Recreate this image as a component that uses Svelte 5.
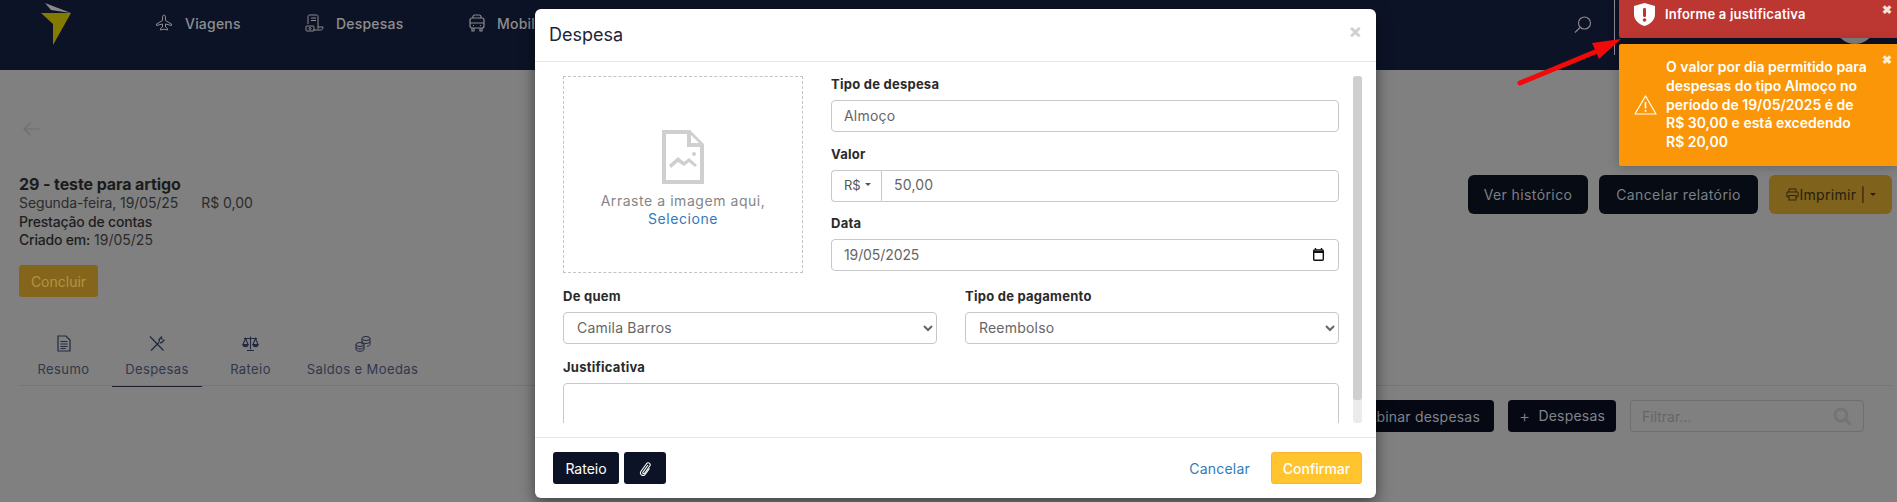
<script>
  let tipo = 'Almoço';
  let valor = '50,00';
  let data = '19/05/2025';
  let justificativa = '';
</script>

<div class="page">
  <header class="topbar">
    <svg class="logo" width="32" height="44" viewBox="0 0 32 44">
      <polygon points="4,0 30,10 10,7" fill="#8a8a8a" />
      <polygon points="0,10 30,10 12,42 12,21" fill="#857a00" />
    </svg>
    <nav class="mainnav">
      <a href="#v" class="nav-viagens">
        <svg width="18" height="18" viewBox="0 0 18 18" fill="none" stroke="#8c8c8c" stroke-width="1">
          <path d="M9 1c1 0 1.500 1.500 1.500 3v2.500l6 3.500v1.500l-6-1.500v3l2 1.500v1.500l-3.500-.8-3.500.8v-1.500l2-1.500v-3l-6 1.500v-1.500l6-3.500v-2.500c0-1.500.5-3 1.500-3z" />
        </svg>
        <span>Viagens</span>
      </a>
      <a href="#d" class="nav-despesas">
        <svg width="19" height="18" viewBox="0 0 19 18" fill="none" stroke="#8c8c8c" stroke-width="1">
          <path d="M3 10V2.500C3 1.500 3.500 1 4.500 1h7c1 0 1.500.5 1.500 1.500V15" />
          <path d="M6 4h5M6 6.500h5" />
          <path d="M13 13h5c0 2-1 3-2.500 3H8" />
          <rect x="1" y="12" width="8" height="5" rx="0.8" />
          <circle cx="5" cy="14.500" r="1" />
        </svg>
        <span>Despesas</span>
      </a>
      <a href="#m" class="nav-mobil">
        <svg width="16" height="18" viewBox="0 0 16 18" fill="none" stroke="#8c8c8c" stroke-width="1.200">
          <path d="M4 4V2.500C4 1.500 5 1 6 1h4c1 0 2 .5 2 1.500V4" />
          <rect x="1" y="4" width="14" height="10" rx="2" />
          <path d="M1 9h14M3 14v3h2v-3M11 14v3h2v-3" />
          <path d="M4 11.500h1M11 11.500h1" />
        </svg>
        <span>Mobilidade</span>
      </a>
    </nav>
    <div class="top-right">
      <svg width="18" height="18" viewBox="0 0 18 18" fill="none" stroke="#8c8c8c" stroke-width="1.100">
        <circle cx="10.500" cy="7" r="6" />
        <path d="M6 11.500L1 16.500" />
      </svg>
      <span class="divider"></span>
      <span class="avatar"></span>
    </div>
  </header>

  <main class="content">
    <svg class="back" width="18" height="14" viewBox="0 0 18 14" fill="none" stroke="#6e6e6e" stroke-width="1.200">
      <path d="M17.500 7H1M7.500 1L1 7l6.500 6" />
    </svg>

    <section class="summary">
      <div class="info">
        <h2>29 - teste para artigo</h2>
        <p><span class="date">Segunda-feira, 19/05/25</span><span>R$ 0,00</span></p>
        <p><b>Prestação de contas</b></p>
        <p><b>Criado em:</b> 19/05/25</p>
        <button class="btn-concluir">Concluir</button>
      </div>
      <div class="actions">
        <button class="btn-dark historico">Ver histórico</button>
        <button class="btn-dark cancelar">Cancelar relatório</button>
        <button class="btn-print">
          <svg width="13" height="13" viewBox="0 0 13 13" fill="none" stroke="#2c2616" stroke-width="1">
            <path d="M3 4V1h7v3M3 9H1V4h11v5h-2" />
            <rect x="3" y="7.500" width="7" height="4.500" />
          </svg>Imprimir | <i class="caret"></i>
        </button>
      </div>
    </section>

    <ul class="tabs">
      <li class="first">
        <svg width="14" height="17" viewBox="0 0 14 17" fill="none" stroke="#232a40" stroke-width="1.200">
          <path d="M1 1h8l4 4v11H1z" />
          <path d="M3.500 6.500h7M3.500 9h7M3.500 11.500h7M3.500 13.500h5" stroke-width="1" />
        </svg>
        Resumo
      </li>
      <li class="active">
        <svg width="16" height="16" viewBox="0 0 16 16" fill="none" stroke="#232a40" stroke-width="1.300">
          <path d="M1 1l13.500 14M2 15L10 7" />
          <path d="M10.500 6.500L10 4l3-3M11 7l1.500.3 3-3M12 2.500l1.500 1.500" />
        </svg>
        Despesas
      </li>
      <li>
        <svg width="17" height="16" viewBox="0 0 17 16" fill="none" stroke="#232a40" stroke-width="1.100">
          <path d="M8.500 1v13M5 15h7M2 3h13" />
          <path d="M3.500 3L1 9h5zM13.500 3L11 9h5z" />
          <path d="M1 9c0 3 5 3 5 0zM11 9c0 3 5 3 5 0z" fill="#232a40" />
        </svg>
        Rateio
      </li>
      <li>
        <svg width="16" height="16" viewBox="0 0 16 16" fill="none" stroke="#232a40" stroke-width="1">
          <ellipse cx="11" cy="3" rx="4" ry="2" />
          <path d="M7 3v6M15 3v6c0 1-1 1.600-3 1.800M7 6c0 1 2 2 4 2s4-1 4-2" />
          <ellipse cx="5" cy="9" rx="4" ry="2" />
          <path d="M1 9v5c0 1 2 1.800 4 1.800s4-.8 4-1.800V9M1 11.500c0 1 2 2 4 2s4-1 4-2" />
        </svg>
        Saldos e Moedas
      </li>
    </ul>

    <div class="toolbar">
      <button class="btn-dark small">Combinar despesas</button>
      <button class="btn-dark small add"><span class="plus">+</span> Despesas</button>
      <div class="filter">
        <span>Filtrar...</span>
        <svg width="19" height="19" viewBox="0 0 19 19" fill="none" stroke="#747474" stroke-width="3">
          <circle cx="8" cy="8" r="6" />
          <path d="M12.500 12.500l5 5" />
        </svg>
      </div>
    </div>
  </main>

  <div class="modal">
    <div class="modal-head">
      <h3>Despesa</h3>
      <span class="close">×</span>
    </div>
    <div class="modal-body">
      <div class="scroll-area">
        <div class="top-row">
          <div class="dropzone">
            <svg width="42" height="54" viewBox="0 0 42 54">
              <path fill="#cfcfcf" fill-rule="evenodd" d="M0 0h28l14 14v40H0zM4 4v46h34V17H25V4zM29 5v8h8z" />
              <circle cx="32" cy="24" r="2" fill="#cfcfcf" />
              <path d="M7 35l9-8 6 5 5-4 8 7-2 2-6-5-5 4-6-4-7 6z" fill="#cfcfcf" />
            </svg>
            <p>Arraste a imagem aqui,<br /><a href="#s">Selecione</a></p>
          </div>
          <div class="right-col">
            <div class="field">
              <label for="tipo">Tipo de despesa</label>
              <input id="tipo" bind:value={tipo} />
            </div>
            <div class="field">
              <label for="valor">Valor</label>
              <div class="input-group">
                <span class="addon">R$ <i class="caret grey"></i></span>
                <input id="valor" bind:value={valor} />
              </div>
            </div>
            <div class="field">
              <label for="data">Data</label>
              <div class="date-wrap">
                <input id="data" class="date" bind:value={data} />
                <svg class="cal" width="11" height="13" viewBox="0 0 11 13" fill="none" stroke="#111" stroke-width="1.400">
                  <rect x="0.700" y="2" width="9.600" height="10.300" rx="1" />
                  <path d="M0.700 4h9.600" stroke-width="2" />
                  <path d="M2.500 0v2M8.500 0v2" />
                </svg>
              </div>
            </div>
          </div>
        </div>
        <div class="two-cols">
          <div class="field">
            <label for="quem">De quem</label>
            <select id="quem"><option>Camila Barros</option></select>
          </div>
          <div class="field">
            <label for="pag">Tipo de pagamento</label>
            <select id="pag"><option>Reembolso</option></select>
          </div>
        </div>
        <div class="field">
          <label for="just">Justificativa</label>
          <textarea id="just" rows="4" bind:value={justificativa}></textarea>
        </div>
      </div>
      <div class="scroll-track"><div class="scroll-thumb"></div></div>
    </div>
    <div class="modal-foot">
      <button class="btn-modal">Rateio</button>
      <button class="btn-modal clip" aria-label="Anexar">
        <svg width="12" height="15" viewBox="0 0 12 15" fill="none" stroke="#fff" stroke-width="1.100">
          <path d="M9 4L4 11c-.8 1.200.8 2.300 1.600 1.200L10.800 5c1.600-2.300-1.700-4.500-3.300-2.300L2 10.200c-2.200 3.200 2.200 6 4.300 3L10.500 7.500" />
        </svg>
      </button>
      <a href="#c" class="cancel">Cancelar</a>
      <button class="btn-confirm">Confirmar</button>
    </div>
  </div>

  <div class="toasts">
    <div class="toast error">
      <svg width="21" height="23" viewBox="0 0 21 23">
        <path fill="#fff" d="M10.500 0L21 3v8c0 6-4.500 10-10.500 12C4.500 21 0 17 0 11V3z" />
        <rect x="9" y="5" width="3" height="9" rx="1.200" fill="#bc3632" />
        <circle cx="10.500" cy="17" r="1.800" fill="#bc3632" />
      </svg>
      <span>Informe a justificativa</span>
      <b class="toast-x">✖</b>
    </div>
    <div class="toast warn">
      <svg width="23" height="20" viewBox="0 0 23 20" fill="none" stroke="#fff" stroke-width="1.200">
        <path d="M11.500 1L22 19H1z" stroke-linejoin="round" />
        <path d="M11.500 7v6.500M11.500 15v1.800" stroke-width="1.600" />
      </svg>
      <span>O valor por dia permitido para<br />despesas do tipo Almoço no<br />período de 19/05/2025 é de<br />R$ 30,00 e está excedendo<br />R$ 20,00</span>
      <b class="toast-x">✖</b>
    </div>
  </div>

  <svg class="arrow" width="110" height="50" viewBox="0 0 110 50">
    <path d="M3 46L78 15" stroke="#f00a0a" stroke-width="5" stroke-linecap="round" />
    <polygon points="104,2 75,6 82,22" fill="#f00a0a" />
  </svg>
</div>

<style>
  :global(body) {
    margin: 0;
    background: #808080;
  }
  * {
    box-sizing: border-box;
  }
  .page {
    position: relative;
    width: 1897px;
    height: 502px;
    overflow: hidden;
    background: #808080;
    font-family: Inter, "Open Sans", sans-serif;
    font-size: 13px;
    color: #222;
  }
  button {
    font-family: inherit;
    border: 0;
  }

  .topbar {
    display: flex;
    height: 70px;
    background: #0d1326;
    padding-left: 41px;
  }
  .logo {
    margin-top: 3px;
  }
  .mainnav {
    display: flex;
    margin-left: 82px;
    height: 46px;
    align-items: center;
  }
  .mainnav a {
    display: flex;
    align-items: center;
    gap: 12px;
    color: #8e8e8e;
    text-decoration: none;
    font-size: 14px;
    font-weight: 500;
    letter-spacing: 0.200px;
  }
  .nav-viagens {
    width: 150px;
  }
  .nav-despesas {
    width: 164px;
  }
  .top-right {
    margin-left: auto;
    display: flex;
    align-items: flex-start;
    padding-top: 16px;
    gap: 22px;
    width: 277px;
  }
  .top-right svg {
    flex: none;
    margin-left: -46px;
  }
  .divider {
    flex: none;
    width: 1px;
    height: 55px;
    margin-top: -16px;
    background: #8a8d97;
  }
  .avatar {
    flex: none;
    width: 40px;
    height: 40px;
    margin: -12px 0 0 198px;
    border-radius: 50%;
    background: #8c8c8c;
  }

  .content {
    padding: 52px 5px 0 19px;
  }
  .back {
    display: block;
    margin-left: 4px;
  }
  .summary {
    display: flex;
    justify-content: space-between;
    margin-top: 39px;
  }
  .info h2 {
    margin: 0;
    font-size: 16px;
    line-height: 19px;
    font-weight: 700;
    letter-spacing: -0.100px;
    color: #1b1b1b;
  }
  .info p {
    margin: 0;
    font-size: 14px;
    line-height: 18.700px;
    color: #2b2b2b;
  }
  .info b {
    font-weight: 500;
    letter-spacing: -0.200px;
    color: #1d1d1d;
  }
  .date {
    margin-right: 23px;
  }
  .btn-concluir {
    display: block;
    margin-top: 15px;
    width: 79px;
    height: 32px;
    border-radius: 3px;
    background: #85651b;
    color: #b39444;
    font-size: 14px;
  }
  .actions {
    display: flex;
    gap: 11px;
  }
  .btn-dark {
    height: 39px;
    padding: 0;
    border-radius: 6px;
    background: #070b14;
    color: #7c7f86;
    font-size: 14px;
    letter-spacing: 0.400px;
  }
  .historico {
    width: 120px;
  }
  .cancelar {
    width: 159px;
  }
  .btn-print {
    width: 123px;
    height: 39px;
    border-radius: 6px;
    background: #7f621b;
    color: #25200f;
    font-size: 14px;
    letter-spacing: 0.300px;
    display: flex;
    align-items: center;
    justify-content: center;
    gap: 1px;
  }
  .caret {
    display: inline-block;
    border: 3.500px solid transparent;
    border-top-color: #25200f;
    border-bottom: 0;
    margin-left: 3px;
    vertical-align: middle;
  }
  .caret.grey {
    border-top-color: #555;
  }

  .tabs {
    display: grid;
    grid-template-columns: 93px 90px 97px 127px;
    margin: 38px 0 0;
    padding: 0;
    list-style: none;
    border-bottom: 1px solid #757575;
  }
  .tabs li {
    display: flex;
    flex-direction: column;
    align-items: center;
    gap: 8px;
    height: 52px;
    margin-bottom: -2px;
    color: #32374a;
    line-height: 18px;
    letter-spacing: 0.400px;
  }
  .tabs li.first {
    padding-right: 4px;
  }
  .tabs svg {
    flex: none;
    height: 17px;
  }
  .tabs li.active {
    border-bottom: 1px solid #1c2030;
  }

  .toolbar {
    display: flex;
    align-items: flex-start;
    justify-content: flex-end;
    gap: 14px;
    margin-top: 14px;
    padding-right: 28px;
  }
  .btn-dark.small {
    height: 32px;
    font-size: 14px;
    letter-spacing: 0.200px;
    padding: 0 14px;
    border-radius: 4px;
    background: #060913;
    color: #80838a;
  }
  .btn-dark.add {
    width: 108px;
    padding: 0;
  }
  .plus {
    font-size: 17px;
    font-weight: 300;
    margin-right: 4px;
    vertical-align: -1px;
  }
  .filter {
    display: flex;
    align-items: center;
    justify-content: space-between;
    width: 234px;
    height: 32px;
    padding: 0 11px;
    border: 1px solid #6f6f6f;
    border-radius: 4px;
    color: #666;
    font-size: 14px;
  }

  .modal {
    position: absolute;
    left: 535px;
    top: 9px;
    width: 841px;
    height: 489px;
    display: flex;
    flex-direction: column;
    background: #fff;
    border-radius: 6px;
    box-shadow: 0 5px 15px rgba(0, 0, 0, 0.5);
  }
  .modal-head {
    display: flex;
    justify-content: space-between;
    height: 53px;
    padding: 0 14px;
    border-bottom: 1px solid #e5e5e5;
  }
  .modal-head h3 {
    margin: 0;
    font-size: 18px;
    line-height: 52px;
    font-weight: 400;
    color: #20263a;
  }
  .close {
    font-size: 20px;
    font-weight: 700;
    line-height: 44px;
    color: #cfcfcf;
  }
  .modal-body {
    flex: 1;
    display: flex;
    min-height: 0;
    padding: 14px 14px 14px 28px;
    gap: 14px;
  }
  .scroll-area {
    flex: 1;
    min-width: 0;
    overflow: hidden;
  }
  .scroll-track {
    flex: none;
    width: 9px;
    border-radius: 3px;
    background: #ebebeb;
  }
  .scroll-thumb {
    height: 324px;
    border-radius: 3px;
    background: #cfcfcf;
  }
  .top-row {
    display: flex;
    gap: 28px;
  }
  .dropzone {
    flex: none;
    width: 240px;
    height: 197px;
    display: flex;
    flex-direction: column;
    align-items: center;
    padding-top: 53px;
    border: 1px dashed #c4c4c4;
    color: #858585;
    text-align: center;
    font-size: 14px;
    letter-spacing: 0.550px;
  }
  .dropzone p {
    margin: 8px 0 0;
    line-height: 18px;
  }
  .dropzone a {
    color: #337ab7;
    text-decoration: none;
  }
  .right-col {
    flex: 1;
    min-width: 0;
  }
  .field {
    margin-bottom: 13.500px;
  }
  .field:last-child {
    margin-bottom: 0;
  }
  label {
    display: block;
    margin-bottom: 8px;
    line-height: 16px;
    font-weight: 700;
    letter-spacing: 0.250px;
    color: #2b2b2b;
  }
  input,
  select,
  textarea {
    display: block;
    width: 100%;
    height: 32px;
    padding: 0 12px 2px;
    border: 1px solid #c8c8c8;
    border-radius: 4px;
    background: #fff;
    color: #666;
    font-family: inherit;
    font-size: 14px;
    letter-spacing: 0.200px;
    outline: none;
  }
  select {
    padding-left: 9px;
  }
  textarea {
    height: 90px;
    resize: none;
  }
  .input-group {
    display: flex;
  }
  .addon {
    flex: none;
    display: flex;
    align-items: center;
    width: 50px;
    height: 32px;
    padding: 0 0 2px 12px;
    border: 1px solid #c8c8c8;
    border-right: 0;
    border-radius: 4px 0 0 4px;
    color: #555;
    gap: 1px;
    font-size: 13px;
  }
  .input-group input {
    border-radius: 0 4px 4px 0;
  }
  .date-wrap {
    position: relative;
  }
  .date {
    letter-spacing: -0.100px;
  }
  .cal {
    position: absolute;
    right: 15px;
    top: 9px;
  }
  .two-cols {
    display: grid;
    grid-template-columns: 374px 374px;
    gap: 28px;
    margin-top: 15px;
  }
  .two-cols .field {
    margin-bottom: 15px;
  }
  .modal-foot {
    display: flex;
    align-items: center;
    gap: 5px;
    height: 61px;
    padding: 0 14px 0 18px;
    border-top: 1px solid #e5e5e5;
  }
  .btn-modal {
    height: 32px;
    width: 66px;
    padding: 0;
    border-radius: 3px;
    background: #0d1326;
    color: #fff;
    font-size: 14px;
  }
  .btn-modal.clip {
    width: 42px;
    display: flex;
    align-items: center;
    justify-content: center;
  }
  .cancel {
    margin-left: auto;
    margin-right: 16px;
    color: #337ab7;
    text-decoration: none;
    font-size: 14px;
    letter-spacing: 0.200px;
  }
  .btn-confirm {
    width: 91px;
    height: 32px;
    border-radius: 3px;
    border: 1px solid #ffb52e;
    background: #ffc42e;
    color: #fff;
    font-size: 14px;
    font-weight: 500;
  }

  .toasts {
    position: absolute;
    right: 0;
    top: 0;
    width: 278px;
    display: flex;
    flex-direction: column;
    gap: 6px;
  }
  .toast {
    position: relative;
    display: flex;
    align-items: center;
    padding-left: 15px;
    color: #fff;
    font-weight: 600;
    border-radius: 0 0 0 2px;
  }
  .toast svg {
    flex: none;
  }
  .error {
    height: 38px;
    padding-bottom: 10px;
    background: #bc3632;
    gap: 10px;
    letter-spacing: 0.200px;
    box-shadow: 0 0 12px rgba(0, 0, 0, 0.25);
  }
  .warn {
    height: 122px;
    background: #fb9608;
    gap: 9px;
    font-size: 14px;
    line-height: 18.700px;
    white-space: nowrap;
    border-radius: 2px 0 0 2px;
    box-shadow: 0 0 12px rgba(0, 0, 0, 0.25);
  }
  .toast-x {
    position: absolute;
    right: 5px;
    top: 1px;
    font-size: 12px;
    letter-spacing: 0;
    line-height: 18px;
    color: #fff;
    opacity: 0.85;
  }
  .warn .toast-x {
    top: 7px;
  }
  .arrow {
    position: absolute;
    left: 1517px;
    top: 37px;
  }
</style>
